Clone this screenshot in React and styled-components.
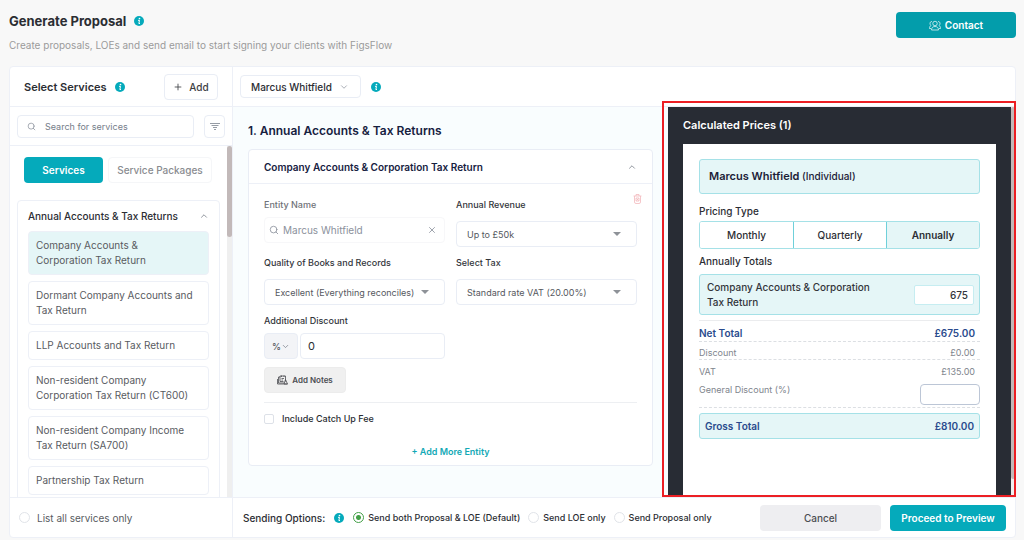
import * as React from 'react'
import styled, { createGlobalStyle } from 'styled-components'
import { ChevronDown, ChevronUp, Plus, Search, X } from 'lucide-react'

const GlobalStyle = createGlobalStyle`
  * {
    box-sizing: border-box;
  }

  body {
    margin: 0;
    background: #f8f8f8;
    color: #2b2d33;
    font-family: Inter, 'Noto Sans', sans-serif;
    font-size: 10px;
  }

  button, input, select {
    font: inherit;
    color: inherit;
  }

  h1, h2, h3, p, ul {
    margin: 0;
    padding: 0;
  }
`

const Page = styled.div`
  display: flex;
  flex-direction: column;
  height: 100vh;
  min-height: 540px;
  padding: 12px 8px 2px 9px;
`

const PageHeader = styled.header`
  display: flex;
  justify-content: space-between;
  align-items: flex-start;
  height: 54px;
  flex: none;
`

const TitleRow = styled.div`
  display: flex;
  align-items: center;
  gap: 8px;
`

const PageTitle = styled.h1`
  font-size: 13px;
  line-height: 18px;
  font-weight: 700;
`

const Subtitle = styled.p`
  margin-top: 7px;
  font-size: 10px;
  line-height: 16px;
  color: #9b9b9b;
`

const SectionTitle = styled.h2`
  font-size: 11px;
  line-height: 16px;
  font-weight: 600;
`

const Button = styled.button`
  display: flex;
  align-items: center;
  justify-content: center;
  flex: none;
  gap: ${ props => props.$gap || '4px' };
  height: ${ props => props.$height || '26px' };
  width: ${ props => props.$width || 'auto' };
  padding: 0;
  border: 1px solid ${ props => props.$border || 'transparent' };
  border-radius: 4px;
  background: ${ props => props.$bg || '#fff' };
  background-clip: border-box;
  color: ${ props => props.$color || '#fff' };
  font-size: ${ props => props.$size || '11px' };
  font-weight: ${ props => props.$weight || 600 };
  white-space: nowrap;
`

const Panel = styled.main`
  display: grid;
  grid-template-columns: 223px minmax(0, 1fr);
  flex: 1;
  min-height: 0;
  border: 1px solid #edf0f7;
  border-radius: 4px;
  background: #fff;
`

const Column = styled.section`
  display: flex;
  flex-direction: column;
  min-width: 0;
  min-height: 0;
`

const Sidebar = styled(Column)`
  border-right: 1px solid #edf0f7;
`

const Bar = styled.div`
  display: flex;
  align-items: center;
  flex: none;
  gap: ${ props => props.$gap || '8px' };
  height: ${ props => props.$height || '40px' };
  padding: ${ props => props.$pad || '0 14px' };
  border-bottom: 1px solid #edf0f7;
`

const Footer = styled.footer`
  display: flex;
  align-items: center;
  flex: none;
  height: 40px;
  padding: ${ props => props.$pad };
  border-top: 1px solid #edf0f7;
`

const Push = styled.div`
  display: flex;
  gap: 9px;
  margin-left: auto;
`

const SearchBox = styled.label`
  display: flex;
  align-items: center;
  gap: ${ props => props.$gap || '4px' };
  flex: ${ props => props.$grow ? 1 : 'none' };
  min-width: 0;
  height: ${ props => props.$height || '26px' };
  padding: 0 ${ props => props.$pad || '4px' };
  border: 1px solid ${ props => props.$faint ? '#f7f7f9' : '#e9edf5' };
  border-radius: 4px;
  color: #8b919c;

  svg {
    flex: none;
  }

  input {
    flex: 1;
    min-width: 0;
    padding: 0;
    border: 0;
    outline: 0;
    background: none;
    font-size: ${ props => props.$size || '9px' };
  }

  input::placeholder {
    color: #757d89;
    opacity: 1;
  }
`

const Scroller = styled.div`
  display: flex;
  flex: 1;
  min-height: 0;
`

const ScrollContent = styled.div`
  flex: 1;
  min-width: 0;
  padding: 11px 7px 0;
  overflow: hidden;
`

const Track = styled.div`
  flex: none;
  width: ${ props => props.$width || '5px' };
  background: #efefef;
`

const Thumb = styled.div`
  height: ${ props => props.$height };
  border-radius: 3px;
  background: #c2b9b9;
`

const Tabs = styled.div`
  display: flex;
  gap: 5px;
  padding: 0 7px;
`

const Group = styled.div`
  margin-top: 17px;
  padding: 0 10px 10px;
  border: 1px solid #edf0f7;
  border-radius: 4px;
`

const GroupHeader = styled.div`
  display: flex;
  align-items: center;
  justify-content: space-between;
  height: 30px;
  font-size: 10px;
  font-weight: 500;
`

const ServiceList = styled.ul`
  display: flex;
  flex-direction: column;
  gap: 6px;
  list-style: none;
`

const Service = styled.li`
  padding: 6px 13px 6px 7px;
  border: 1px solid #edf0f7;
  border-radius: 4px;
  background: ${ props => props.$active ? '#e5f6f7' : '#fff' };
  color: #595b5f;
  font-size: 10px;
  line-height: 15px;
`

const Choice = styled.label`
  display: flex;
  align-items: center;
  gap: ${ props => props.$gap || '4px' };
  margin-right: 8px;
  color: ${ props => props.$muted ? '#595b5f' : '#2b2d33' };
  font-size: ${ props => props.$size || '9px' };
  font-weight: ${ props => props.$muted ? 400 : 500 };
  white-space: nowrap;
`

const Radio = styled.input.attrs({ type: 'radio' })`
  appearance: none;
  flex: none;
  width: 11px;
  height: 11px;
  margin: 0;
  border: 1px solid #e1e4e9;
  border-radius: 50%;
  background: #fff;

  &:checked {
    border-color: #43a047;
    background: radial-gradient(circle, #43a047 0 2px, #fff 3px);
  }
`

const Checkbox = styled.input.attrs({ type: 'checkbox' })`
  appearance: none;
  width: 10px;
  height: 10px;
  margin: 0;
  border: 1px solid #dde1e8;
  border-radius: 2px;
`

const Body = styled.div`
  display: grid;
  grid-template-columns: minmax(0, 1fr) 347px;
  flex: 1;
  min-height: 0;
`

const Form = styled.div`
  padding: 16px 15px 0;
  background: #f9fdfe;
`

const FormTitle = styled.h2`
  color: #16213f;
  font-size: 12px;
  line-height: 16px;
  font-weight: 600;
`

const Card = styled.div`
  margin-top: 10px;
  border: 1px solid #e9edf5;
  border-radius: 4px;
  background: #fff;
`

const CardHeader = styled.div`
  display: flex;
  align-items: center;
  justify-content: space-between;
  height: 34px;
  padding: 0 15px;
  border-bottom: 1px solid #edf0f7;
  color: #16213f;

  h3 {
    font-size: 10px;
    font-weight: 600;
  }
`

const CardBody = styled.div`
  padding: 13px 15px 5px;
`

const Fields = styled.div`
  display: grid;
  grid-template-columns: repeat(2, minmax(0, 1fr));
  gap: 8px 11px;
`

const Field = styled.div`
  display: flex;
  flex-direction: column;
  gap: ${ props => props.$tight ? '4px' : '8px' };
  position: relative;
`

const Label = styled.label`
  color: ${ props => props.$muted ? '#6f7278' : '#33353b' };
  font-size: 9px;
  line-height: 16px;
  font-weight: 500;
`

const SelectBox = styled.div`
  display: grid;
  align-items: center;
  width: ${ props => props.$width || 'auto' };
  height: ${ props => props.$height || '26px' };
  border: 1px solid #e9edf5;
  border-radius: 4px;
  background: ${ props => props.$bg || '#fff' };

  select, svg {
    grid-area: 1 / 1;
  }

  select {
    appearance: none;
    width: 100%;
    height: 100%;
    padding: 0 ${ props => props.$pad || '10px' };
    border: 0;
    outline: 0;
    background: none;
    color: ${ props => props.$color || '#55585e' };
    font-size: ${ props => props.$size || '9px' };
    font-weight: ${ props => props.$weight || 400 };
  }

  svg {
    justify-self: end;
    margin-right: ${ props => props.$iconGap || '15px' };
    pointer-events: none;
  }
`

const DiscountRow = styled.div`
  display: flex;
  gap: 2px;
`

const TextInput = styled.input`
  flex: ${ props => props.$width ? 'none' : 1 };
  width: ${ props => props.$width || 'auto' };
  min-width: 0;
  height: ${ props => props.$height || '26px' };
  padding: 0 ${ props => props.$pad || '7px' };
  border: 1px solid ${ props => props.$border || '#e9edf5' };
  border-radius: ${ props => props.$radius || '4px' };
  outline: 0;
  background: #fff;
  font-size: ${ props => props.$size || '11px' };
  text-align: ${ props => props.$align || 'left' };
`

const DeleteButton = styled.button`
  position: absolute;
  top: -3px;
  right: -5px;
  display: flex;
  padding: 0;
  border: 0;
  background: none;
`

const Toolbar = styled.div`
  margin-top: 8px;
`

const CatchUp = styled.div`
  margin: 9px 0 20px;
  padding-top: 10px;
  border-top: 1px solid #edeff2;
`

const MoreLink = styled.a`
  display: block;
  color: #12a9b6;
  font-size: 9px;
  line-height: 16px;
  font-weight: 600;
  text-align: center;
  text-decoration: none;
`

const Prices = styled.aside`
  display: flex;
  position: relative;
  min-height: 0;
`

const Highlight = styled.div`
  position: absolute;
  inset: -6px -1px 0 -6px;
  border: 2px solid #ec1f24;
  pointer-events: none;
`

const PricesDark = styled.div`
  display: flex;
  flex-direction: column;
  flex: 1;
  padding: 0 15px;
  background: #282c34;

  h2 {
    color: #fff;
    font-size: 11px;
    line-height: 37px;
    font-weight: 600;
  }
`

const Sheet = styled.div`
  flex: 1;
  padding: 15px 16px;
  background: #fff;
`

const Tinted = styled.div`
  display: flex;
  align-items: center;
  justify-content: space-between;
  height: ${ props => props.$height };
  padding: ${ props => props.$pad };
  border: 1px solid #a5e1e7;
  border-radius: 3px;
  background: #e5f6f7;
  color: ${ props => props.$color || '#33353b' };
  font-size: 10px;
  line-height: 15px;
  font-weight: ${ props => props.$weight || 500 };
`

const Spaced = styled.div`
  margin-top: 5px;
`

const ItemName = styled.label`
  max-width: 180px;
`

const Person = styled.p`
  color: #1b2036;
  font-size: 10px;
  font-weight: 500;

  strong {
    font-size: 11px;
    font-weight: 600;
  }
`

const SheetLabel = styled.h3`
  margin-top: ${ props => props.$top };
  font-size: 10px;
  line-height: 16px;
  font-weight: 500;
`

const Segments = styled.div`
  display: grid;
  grid-template-columns: repeat(3, 1fr);
  height: 28px;
  margin-top: 2px;
  border: 1px solid #a5e1e7;
  border-radius: 3px;
  overflow: hidden;
`

const Segment = styled.button`
  padding: 0;
  border: 0;
  border-left: ${ props => props.$first ? '0' : '1px solid #6fd0da' };
  background: ${ props => props.$active ? '#e5f6f7' : '#fff' };
  font-size: 10px;
  font-weight: ${ props => props.$active ? 600 : 500 };
`

const Totals = styled.div`
  margin: 5px 0;
  border-top: 1px solid #ebecee;
`

const TotalRow = styled.div`
  display: flex;
  align-items: ${ props => props.$top ? 'flex-start' : 'center' };
  justify-content: space-between;
  height: ${ props => props.$height };
  padding: ${ props => props.$pad || '4px 5px 0 0' };
  border-bottom: ${ props => props.$line ? '1px dashed #dcdfe3' : '0' };
  color: ${ props => props.$strong ? '#2a4b8d' : '#80858d' };
  font-size: ${ props => props.$strong ? '10px' : '9px' };
  font-weight: ${ props => props.$strong ? 600 : 400 };
`

const SendingTitle = styled.span`
  margin-right: 9px;
  font-size: 10px;
  font-weight: 500;
`

const SendingChoices = styled.div`
  display: flex;
  margin-left: 9px;
`

const InfoIcon = () => (
  <svg width="10" height="10" viewBox="0 0 20 20" role="img" aria-label="Info">
    <circle cx="10" cy="10" r="10" fill="#05aabb" />
    <circle cx="11" cy="5" r="1.7" fill="#fff" />
    <path d="M8 8.7h3L9.7 15H12" fill="none" stroke="#fff" strokeWidth="2" />
  </svg>
)

const Caret = () => (
  <svg width="8" height="4" viewBox="0 0 8 4">
    <path d="M0 0h8L4 4z" fill="#8e9298" />
  </svg>
)

const FilterIcon = () => (
  <svg width="10" height="7" viewBox="0 0 10 7" fill="none" stroke="#969ca5">
    <path d="M0 .5h10M1.5 2.5h7M3 4.5h4M4 6.5h2" />
  </svg>
)

const PeopleIcon = () => (
  <svg width="12" height="11" viewBox="0 0 24 22" fill="none" stroke="#fff" strokeWidth="1.4">
    <circle cx="12" cy="7" r="4.5" />
    <path d="M5 20c0-5 3-7 7-7s7 2 7 7zM6 3C3 3 2 5 2 7s1 3 2 4c-2 1-3 3-3 6h3M18 3c3 0 4 2 4 4s-1 3-2 4c2 1 3 3 3 6h-3" />
  </svg>
)

const NotesIcon = () => (
  <svg width="11" height="10" viewBox="0 0 22 20" fill="none" stroke="#4b4d52" strokeWidth="1.6">
    <path d="M3 4h3M3 4v12h11M6 2h11v11M6 2v11h7M9 1v3M14 1v3M9 7h5M9 10h3M17 9l4 9h-7zM1 8v10h20" />
  </svg>
)

const TrashIcon = () => (
  <svg width="9" height="10" viewBox="0 0 18 20" fill="none" stroke="#f3b9bc" strokeWidth="1.6">
    <path d="M1 4h16M6 4V1h6v3M3 4v12q0 3 3 3h6q3 0 3-3V4M6 8h6v6H6zM7 9l4 4M11 9l-4 4" />
  </svg>
)

const services = [
  'Company Accounts & Corporation Tax Return',
  'Dormant Company Accounts and Tax Return',
  'LLP Accounts and Tax Return',
  'Non-resident Company Corporation Tax Return (CT600)',
  'Non-resident Company Income Tax Return (SA700)',
  'Partnership Tax Return',
]

const sending = ['Send both Proposal & LOE (Default)', 'Send LOE only', 'Send Proposal only']

const periods = ['Monthly', 'Quarterly', 'Annually']

const SelectField = ({ id, label, value, children }) => (
  <Field>
    <Label htmlFor={ id }>{ label }</Label>
    <SelectBox>
      <select id={ id }><option>{ value }</option></select>
      <Caret />
    </SelectBox>
    { children }
  </Field>
)

const ServicesColumn = () => (
  <Sidebar>
    <Bar>
      <SectionTitle>Select Services</SectionTitle>
      <InfoIcon />
      <Push>
        <Button $width="54px" $border="#e9edf5" $color="#3c3e43" $size="10px" $weight={ 500 } $gap="6px">
          <Plus size={ 10 } />
          Add
        </Button>
      </Push>
    </Bar>
    <Bar $height="39px" $pad="0 7px" $gap="10px">
      <SearchBox $grow $gap="9px" $pad="9px" $height="23px">
        <Search size={ 9 } />
        <input placeholder="Search for services" aria-label="Search for services" />
      </SearchBox>
      <Button $width="21px" $height="23px" $border="#e9edf5" aria-label="Filter"><FilterIcon /></Button>
    </Bar>
    <Scroller>
      <ScrollContent>
        <Tabs>
          <Button $width="79px" $bg="#05aabb" $size="10px">Services</Button>
          <Button $width="104px" $border="#f5f6f8" $color="#8a8c90" $size="10px" $weight={ 500 }>
            Service Packages
          </Button>
        </Tabs>
        <Group>
          <GroupHeader>
            Annual Accounts & Tax Returns
            <ChevronUp size={ 10 } color="#7c828c" />
          </GroupHeader>
          <ServiceList>
            {services.map((name, i) => (
              <Service key={ name } $active={ i === 0 }>{ name }</Service>
            ))}
          </ServiceList>
        </Group>
      </ScrollContent>
      <Track><Thumb $height="91px" /></Track>
    </Scroller>
    <Footer $pad="0 9px">
      <Choice $muted $gap="7px" $size="10px">
        <Radio name="list" />
        List all services only
      </Choice>
    </Footer>
  </Sidebar>
)

const ProposalForm = () => (
  <Form>
    <FormTitle>1. Annual Accounts & Tax Returns</FormTitle>
    <Card>
      <CardHeader>
        <h3>Company Accounts & Corporation Tax Return</h3>
        <ChevronUp size={ 10 } color="#7c828c" />
      </CardHeader>
      <CardBody>
        <Fields>
          <Field $tight>
            <Label $muted htmlFor="entity">Entity Name</Label>
            <SearchBox $faint $size="10px" $pad="4px 0 4px">
              <Search size={ 10 } />
              <input id="entity" defaultValue="Marcus Whitfield" />
              <ClearMark>
                <X size={ 10 } />
              </ClearMark>
            </SearchBox>
          </Field>
          <SelectField id="revenue" label="Annual Revenue" value="Up to £50k">
            <DeleteButton aria-label="Delete entity"><TrashIcon /></DeleteButton>
          </SelectField>
          <SelectField id="quality" label="Quality of Books and Records" value="Excellent (Everything reconciles)" />
          <SelectField id="tax" label="Select Tax" value="Standard rate VAT (20.00%)" />
          <Field $tight>
            <Label htmlFor="discount">Additional Discount</Label>
            <DiscountRow>
              <SelectBox $width="34px" $bg="#f3f4f7" $pad="7px" $iconGap="7px" $weight={ 500 }>
                <select aria-label="Discount unit"><option>%</option></select>
                <ChevronDown size={ 9 } color="#7c828c" />
              </SelectBox>
              <TextInput id="discount" defaultValue="0" />
            </DiscountRow>
          </Field>
        </Fields>
        <Toolbar>
          <Button $width="82px" $bg="#f0f0f0" $border="#ececec" $color="#4b4d52" $size="8px">
            <NotesIcon />
            Add Notes
          </Button>
        </Toolbar>
        <CatchUp>
          <Choice $gap="8px">
            <Checkbox />
            Include Catch Up Fee
          </Choice>
        </CatchUp>
        <MoreLink href="#">+ Add More Entity</MoreLink>
      </CardBody>
    </Card>
  </Form>
)

const ClearMark = styled.span`
  display: flex;
  padding-right: 3px;
`

const PricesPanel = () => (
  <Prices>
    <PricesDark>
      <h2>Calculated Prices (1)</h2>
      <Sheet>
        <Tinted $height="35px" $pad="0 9px">
          <Person><strong>Marcus Whitfield</strong> (Individual)</Person>
        </Tinted>
        <SheetLabel $top="9px">Pricing Type</SheetLabel>
        <Segments>
          {periods.map((name, i) => (
            <Segment key={ name } $first={ i === 0 } $active={ i === 2 }>{ name }</Segment>
          ))}
        </Segments>
        <SheetLabel $top="4px">Annually Totals</SheetLabel>
        <Spaced>
          <Tinted $height="41px" $pad="0 5px 0 7px">
            <ItemName htmlFor="price">Company Accounts & Corporation Tax Return</ItemName>
            <TextInput
              id="price"
              defaultValue="675"
              $width="60px"
              $height="20px"
              $pad="5px"
              $size="10px"
              $border="#c6edf1"
              $radius="2px"
              $align="right"
            />
          </Tinted>
        </Spaced>
        <Totals>
          <TotalRow $strong $line $height="21px"><span>Net Total</span><span>£675.00</span></TotalRow>
          <TotalRow $line $height="18px"><span>Discount</span><span>£0.00</span></TotalRow>
          <TotalRow $height="19px"><span>VAT</span><span>£135.00</span></TotalRow>
          <TotalRow $top $line $height="29px" $pad="5px 0 0">
            <label htmlFor="general">General Discount (%)</label>
            <TextInput id="general" $width="60px" $height="21px" $border="#bcc6d6" />
          </TotalRow>
        </Totals>
        <Tinted $height="26px" $pad="0 5px" $color="#2a4b8d" $weight={ 600 }>
          <span>Gross Total</span>
          <span>£810.00</span>
        </Tinted>
      </Sheet>
    </PricesDark>
    <Track $width="4px"><Thumb $height="372px" /></Track>
    <Highlight />
  </Prices>
)

class App extends React.Component {

  state = {
    option: 0,
  }

  render() {
    return (
      <Page>
        <GlobalStyle />
        <PageHeader>
          <div>
            <TitleRow>
              <PageTitle>Generate Proposal</PageTitle>
              <InfoIcon />
            </TitleRow>
            <Subtitle>Create proposals, LOEs and send email to start signing your clients with FigsFlow</Subtitle>
          </div>
          <Button $width="120px" $bg="#039dab" $size="10px">
            <PeopleIcon />
            Contact
          </Button>
        </PageHeader>
        <Panel>
          <ServicesColumn />
          <Column>
            <Bar $pad="0 7px" $gap="10px">
              <SelectBox $width="121px" $height="23px" $size="10px" $color="#2b2d33" $weight={ 500 } $iconGap="11px">
                <select aria-label="Client"><option>Marcus Whitfield</option></select>
                <ChevronDown size={ 10 } color="#9aa0a8" />
              </SelectBox>
              <InfoIcon />
            </Bar>
            <Body>
              <ProposalForm />
              <PricesPanel />
            </Body>
            <Footer $pad="0 9px 0 10px">
              <SendingTitle>Sending Options:</SendingTitle>
              <InfoIcon />
              <SendingChoices>
                {sending.map((name, i) => (
                  <Choice key={ name }>
                    <Radio
                      name="sending"
                      checked={ this.state.option === i }
                      onChange={ () => this.setState({ option: i }) }
                    />
                    { name }
                  </Choice>
                ))}
              </SendingChoices>
              <Push>
                <Button $width="121px" $bg="#eeeef1" $color="#4b4d52" $size="10px" $weight={ 500 }>Cancel</Button>
                <Button $width="116px" $bg="#05aabb" $size="10px">Proceed to Preview</Button>
              </Push>
            </Footer>
          </Column>
        </Panel>
      </Page>
    )
  }
}

export default App
